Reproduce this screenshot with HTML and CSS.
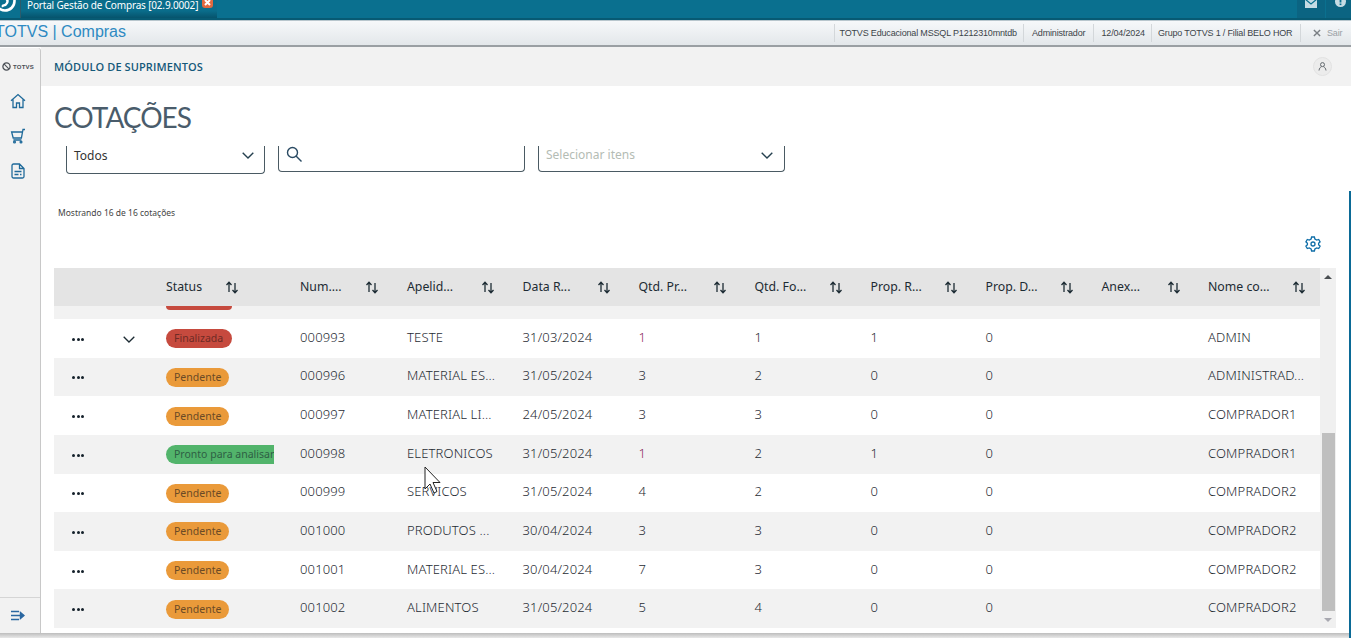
FILE: index.html
```html
<!DOCTYPE html>
<html lang="pt-BR">
<head>
<meta charset="utf-8">
<title>Portal Gestão de Compras</title>
<link rel="stylesheet" href="styles.css">
</head>
<body>
<div class="app">
  <header class="topbar">
    <svg class="applogo" width="20" height="18" viewBox="0 0 20 18"><circle cx="5" cy="1" r="9.500" fill="none" stroke="#fff" stroke-width="2.600"/><path d="M1 -1c3-2 8 0 6 4S2 4 3 7" fill="none" stroke="#fff" stroke-width="2.400"/></svg>
    <div class="tab">
      <span class="tabtext">Portal Gestão de Compras [02.9.0002]</span>
      <svg class="tabclose" width="11" height="11" viewBox="0 0 11 11"><rect width="11" height="11" rx="3" fill="#e0683f"/><path d="M3 3l5 5M8 3l-5 5" stroke="#fff" stroke-width="2"/></svg>
    </div>
    <div class="topactions">
      <div class="topbtn"><svg width="12" height="9" viewBox="0 0 12 9"><rect width="12" height="9" fill="#c5dbe4"/><path d="M0 0l6 5 6-5" fill="none" stroke="#0a7190" stroke-width="1.200"/></svg></div>
      <div class="topbtn"><svg width="11" height="11" viewBox="0 0 11 11"><circle cx="5.500" cy="4.500" r="5.500" fill="#c5dbe4"/><rect x="4.600" y="1.500" width="1.800" height="4" fill="#0a7190"/><rect x="4.600" y="6.500" width="1.800" height="1.600" fill="#0a7190"/></svg></div>
    </div>
  </header>

  <div class="appbar">
    <div class="apptitle">TOTVS | Compras</div>
    <div class="appinfo">
      <span class="info info-db">TOTVS Educacional MSSQL P1212310mntdb</span>
      <span class="info info-user">Administrador</span>
      <span class="info info-date">12/04/2024</span>
      <span class="info info-branch">Grupo TOTVS 1 / Filial BELO HOR</span>
      <span class="logout"><svg width="8" height="8" viewBox="0 0 9 9"><path d="M1 1l7 7M8 1l-7 7" stroke="#7a7f84" stroke-width="1.600"/></svg>Sair</span>
    </div>
  </div>

  <div class="workspace">
    <aside class="sidebar">
      <div class="brand">
        <svg width="9" height="9" viewBox="0 0 9 9"><circle cx="4.500" cy="4.500" r="3.600" fill="none" stroke="#4a4f55" stroke-width="1.300"/><path d="M2.200 2.200l4.600 4.600" stroke="#4a4f55" stroke-width="1.100"/></svg>
        <span>TOTVS</span>
      </div>
      <nav class="sidenav">
        <svg width="16" height="16" viewBox="0 0 16 16" fill="none" stroke="#1f6a9a" stroke-width="1.300"><path d="M1 7.800L8 1.500l7 6.300M3 6.500V14.500h3.500V10h3v4.500H13V6.500"/></svg>
        <svg width="16" height="16" viewBox="0 0 16 16" fill="none" stroke="#1f6a9a" stroke-width="1.300"><path d="M15 1.500h-2L11.400 10H3.200L1.600 4H12.600M3.400 12h8"/><circle cx="4.500" cy="14" r=".9"/><circle cx="11" cy="14" r=".9"/></svg>
        <svg width="14" height="16" viewBox="0 0 14 16" fill="none" stroke="#1f6a9a" stroke-width="1.300"><path d="M2.500 1h6L13 5.500V13.500a1.500 1.500 0 0 1-1.500 1.500h-9A1.500 1.500 0 0 1 1 13.500V2.500A1.500 1.500 0 0 1 2.500 1zM8.500 1v4.500H13M3.500 8.500h7M3.500 11.500h4M9 11.500h1.500"/></svg>
      </nav>
      <div class="sidefoot">
        <svg width="14" height="11" viewBox="0 0 14 11" fill="none" stroke="#2a67a0" stroke-width="1.400"><path d="M0 1.500h8M0 5.500h11M0 9.500h8"/><path d="M9.500 2.500l3.500 3-3.500 3z" fill="#2a67a0"/></svg>
      </div>
    </aside>

    <main class="content">
      <div class="modulebar">
        <span class="modulename">MÓDULO DE SUPRIMENTOS</span>
        <span class="avatar"><svg width="9" height="9" viewBox="0 0 9 9" fill="none" stroke="#555b61" stroke-width=".9"><circle cx="4.500" cy="2.600" r="2"/><path d="M1 8.500c.3-2.400 1.500-3.500 2.400-3.700M8 8.500c-.3-2.400-1.500-3.500-2.400-3.700"/></svg></span>
      </div>
      <div class="page">
        <h1 class="pagetitle">COTAÇÕES</h1>
        <div class="filters">
          <div class="field field-status"><span>Todos</span><svg class="chev" width="12" height="7" viewBox="0 0 12 7" fill="none" stroke="#25404f" stroke-width="1.400"><path d="M.7.7L6 6l5.300-5.300"/></svg></div>
          <div class="field field-search"><svg width="17" height="17" viewBox="0 0 17 17" fill="none" stroke="#2a4a63" stroke-width="1.400"><circle cx="6.500" cy="6.500" r="5"/><path d="M10 10l5.500 5.500"/></svg></div>
          <div class="field field-items"><span class="placeholder">Selecionar itens</span><svg class="chev" width="12" height="7" viewBox="0 0 12 7" fill="none" stroke="#25404f" stroke-width="1.400"><path d="M.7.7L6 6l5.300-5.300"/></svg></div>
        </div>
        <div class="count">Mostrando 16 de 16 cotações</div>
        <div class="tools">
          <svg width="16" height="16" viewBox="0 0 16 16" fill="none" stroke="#0f6ea8" stroke-width="1.300"><path d="M6.600 1h2.800l.5 2 1.800 1 2-.6 1.400 2.400-1.500 1.400v1.600l1.500 1.400-1.400 2.400-2-.6-1.800 1-.5 2H6.600l-.5-2-1.800-1-2 .6L.9 10.200l1.500-1.400V7.200L.9 5.800l1.400-2.400 2 .6 1.800-1z"/><circle cx="8" cy="8" r="2"/></svg>
        </div>
        <div class="tablewrap">
          <div class="table">
            <div class="row head">
              <div class="cell"></div>
              <div class="cell hcell"><span>Status</span><svg class="sort" width="14" height="13" viewBox="0 0 14 13" fill="none" stroke="#1c2b33" stroke-width="1.300"><path d="M4 11V2M1.500 4L4 1.300 6.500 4M10 2v9.500M7.500 9l2.500 2.700L12.500 9"/></svg></div>
              <div class="cell hcell"><span>Num....</span><svg class="sort" width="14" height="13" viewBox="0 0 14 13" fill="none" stroke="#1c2b33" stroke-width="1.300"><path d="M4 11V2M1.500 4L4 1.300 6.500 4M10 2v9.500M7.500 9l2.500 2.700L12.500 9"/></svg></div>
              <div class="cell hcell"><span>Apelid...</span><svg class="sort" width="14" height="13" viewBox="0 0 14 13" fill="none" stroke="#1c2b33" stroke-width="1.300"><path d="M4 11V2M1.500 4L4 1.300 6.500 4M10 2v9.500M7.500 9l2.500 2.700L12.500 9"/></svg></div>
              <div class="cell hcell"><span>Data R...</span><svg class="sort" width="14" height="13" viewBox="0 0 14 13" fill="none" stroke="#1c2b33" stroke-width="1.300"><path d="M4 11V2M1.500 4L4 1.300 6.500 4M10 2v9.500M7.500 9l2.500 2.700L12.500 9"/></svg></div>
              <div class="cell hcell"><span>Qtd. Pr...</span><svg class="sort" width="14" height="13" viewBox="0 0 14 13" fill="none" stroke="#1c2b33" stroke-width="1.300"><path d="M4 11V2M1.500 4L4 1.300 6.500 4M10 2v9.500M7.500 9l2.500 2.700L12.500 9"/></svg></div>
              <div class="cell hcell"><span>Qtd. Fo...</span><svg class="sort" width="14" height="13" viewBox="0 0 14 13" fill="none" stroke="#1c2b33" stroke-width="1.300"><path d="M4 11V2M1.500 4L4 1.300 6.500 4M10 2v9.500M7.500 9l2.500 2.700L12.500 9"/></svg></div>
              <div class="cell hcell"><span>Prop. R...</span><svg class="sort" width="14" height="13" viewBox="0 0 14 13" fill="none" stroke="#1c2b33" stroke-width="1.300"><path d="M4 11V2M1.500 4L4 1.300 6.500 4M10 2v9.500M7.500 9l2.500 2.700L12.500 9"/></svg></div>
              <div class="cell hcell"><span>Prop. D...</span><svg class="sort" width="14" height="13" viewBox="0 0 14 13" fill="none" stroke="#1c2b33" stroke-width="1.300"><path d="M4 11V2M1.500 4L4 1.300 6.500 4M10 2v9.500M7.500 9l2.500 2.700L12.500 9"/></svg></div>
              <div class="cell hcell"><span>Anex...</span><svg class="sort" width="14" height="13" viewBox="0 0 14 13" fill="none" stroke="#1c2b33" stroke-width="1.300"><path d="M4 11V2M1.500 4L4 1.300 6.500 4M10 2v9.500M7.500 9l2.500 2.700L12.500 9"/></svg></div>
              <div class="cell hcell"><span>Nome co...</span><svg class="sort" width="14" height="13" viewBox="0 0 14 13" fill="none" stroke="#1c2b33" stroke-width="1.300"><path d="M4 11V2M1.500 4L4 1.300 6.500 4M10 2v9.500M7.500 9l2.500 2.700L12.500 9"/></svg></div>
            </div>
            <div class="rows">
              <div class="row partial">
                <div class="cell"></div>
                <div class="cell"><span class="badge red badge-cut"></span></div>
              </div>
              <div class="row">
                <div class="cell acts"><span class="dots"><i></i><i></i><i></i></span><svg width="12" height="7" viewBox="0 0 12 7" fill="none" stroke="#1c2b33" stroke-width="1.300"><path d="M.7.7L6 6l5.300-5.300"/></svg></div>
                <div class="cell"><span class="badge red">Finalizada</span></div>
                <div class="cell">000993</div><div class="cell">TESTE</div><div class="cell">31/03/2024</div><div class="cell purple">1</div><div class="cell">1</div><div class="cell">1</div><div class="cell">0</div><div class="cell"></div><div class="cell">ADMIN</div>
              </div>
              <div class="row">
                <div class="cell acts"><span class="dots"><i></i><i></i><i></i></span></div>
                <div class="cell"><span class="badge orange">Pendente</span></div>
                <div class="cell">000996</div><div class="cell">MATERIAL ES...</div><div class="cell">31/05/2024</div><div class="cell">3</div><div class="cell">2</div><div class="cell">0</div><div class="cell">0</div><div class="cell"></div><div class="cell">ADMINISTRAD...</div>
              </div>
              <div class="row">
                <div class="cell acts"><span class="dots"><i></i><i></i><i></i></span></div>
                <div class="cell"><span class="badge orange">Pendente</span></div>
                <div class="cell">000997</div><div class="cell">MATERIAL LI...</div><div class="cell">24/05/2024</div><div class="cell">3</div><div class="cell">3</div><div class="cell">0</div><div class="cell">0</div><div class="cell"></div><div class="cell">COMPRADOR1</div>
              </div>
              <div class="row">
                <div class="cell acts"><span class="dots"><i></i><i></i><i></i></span></div>
                <div class="cell"><span class="badge green">Pronto para analisar</span></div>
                <div class="cell">000998</div><div class="cell">ELETRONICOS</div><div class="cell">31/05/2024</div><div class="cell purple">1</div><div class="cell">2</div><div class="cell">1</div><div class="cell">0</div><div class="cell"></div><div class="cell">COMPRADOR1</div>
              </div>
              <div class="row">
                <div class="cell acts"><span class="dots"><i></i><i></i><i></i></span></div>
                <div class="cell"><span class="badge orange">Pendente</span></div>
                <div class="cell">000999</div><div class="cell">SERVICOS</div><div class="cell">31/05/2024</div><div class="cell">4</div><div class="cell">2</div><div class="cell">0</div><div class="cell">0</div><div class="cell"></div><div class="cell">COMPRADOR2</div>
              </div>
              <div class="row">
                <div class="cell acts"><span class="dots"><i></i><i></i><i></i></span></div>
                <div class="cell"><span class="badge orange">Pendente</span></div>
                <div class="cell">001000</div><div class="cell">PRODUTOS ...</div><div class="cell">30/04/2024</div><div class="cell">3</div><div class="cell">3</div><div class="cell">0</div><div class="cell">0</div><div class="cell"></div><div class="cell">COMPRADOR2</div>
              </div>
              <div class="row">
                <div class="cell acts"><span class="dots"><i></i><i></i><i></i></span></div>
                <div class="cell"><span class="badge orange">Pendente</span></div>
                <div class="cell">001001</div><div class="cell">MATERIAL ES...</div><div class="cell">30/04/2024</div><div class="cell">7</div><div class="cell">3</div><div class="cell">0</div><div class="cell">0</div><div class="cell"></div><div class="cell">COMPRADOR2</div>
              </div>
              <div class="row">
                <div class="cell acts"><span class="dots"><i></i><i></i><i></i></span></div>
                <div class="cell"><span class="badge orange">Pendente</span></div>
                <div class="cell">001002</div><div class="cell">ALIMENTOS</div><div class="cell">31/05/2024</div><div class="cell">5</div><div class="cell">4</div><div class="cell">0</div><div class="cell">0</div><div class="cell"></div><div class="cell">COMPRADOR2</div>
              </div>
            </div>
          </div>
          <div class="scrollbar">
            <span class="arrow-up"></span>
            <span class="thumb"></span>
            <span class="arrow-down"></span>
          </div>
        </div>
      </div>
    </main>
  </div>
  <div class="edge"></div>
  <div class="bottomshadow"></div>
  <svg class="cursor" width="19" height="30" viewBox="0 0 19 30"><path d="M1 1v22l5-5 4 9 3-1.500-4-9h7z" fill="#fff" stroke="#222" stroke-width="1"/></svg>
</div>
</body>
</html>
```
FILE: styles.css
```css
* { box-sizing: border-box; }
html, body { margin: 0; padding: 0; height: 100%; overflow: hidden; background: #fff; }
body { font-family: "Open Sans", "Liberation Sans", sans-serif; color: #333; }
.app { position: relative; width: 1351px; height: 638px; display: flex; flex-direction: column; overflow: hidden; }

.topbar { height: 20px; flex: none; background: #0a708f; border-bottom: 2px solid #075a73; display: flex; align-items: stretch; }
.applogo { flex: none; }
.tab { width: 197px; height: 18px; flex: none; padding-left: 6px; background: linear-gradient(#0a6d8b, #0a6d8b 60%, #06536c); display: flex; align-items: flex-start; gap: 4px; border-left: 1px solid #2c5b6b; overflow: hidden; }
.tabtext { font-family: "Noto Sans", sans-serif; font-size: 10px; letter-spacing: -.17px; line-height: 11px; color: #fff; white-space: nowrap; }
.tabclose { margin-top: -3px; flex: none; }
.topactions { margin-left: auto; display: flex; gap: 1px; height: 18px; }
.topbtn { width: 28px; height: 18px; background: #0b6482; display: flex; justify-content: flex-end; padding-right: 8px; align-items: flex-start; overflow: hidden; }
.topbtn svg { margin-top: -1px; }
.topbtn:last-child { width: 25px; padding-right: 5px; }
.topbtn:last-child svg { margin-top: -3px; }

.appbar { height: 27px; flex: none; border-top: 1px solid #b8c6cd; border-bottom: 2px solid #9a9fa3; background: linear-gradient(#f6f8fa, #e3e7ea); display: flex; align-items: center; justify-content: space-between; overflow: hidden; }
.apptitle { font-family: "Liberation Sans", sans-serif; font-size: 16px; line-height: 20px; color: #2e8ac2; margin: -2px 0 0 -5px; white-space: nowrap; }
.appinfo { display: flex; align-items: center; height: 18px; font-family: "Liberation Sans", sans-serif; font-size: 9px; letter-spacing: -.17px; color: #3c4449; }
.info { height: 100%; display: flex; align-items: center; border-left: 1px solid #d3d7da; white-space: nowrap; overflow: hidden; }
.info-db { width: 189.500px; padding-left: 5px; }
.info-user { width: 69.500px; padding-left: 8px; }
.info-date { width: 58.500px; padding-left: 8px; }
.info-branch { width: 149px; padding-left: 6px; }
.logout { width: 51px; height: 100%; display: flex; align-items: center; gap: 6px; padding-left: 12px; color: #9aa0a5; border-left: 1px solid #d3d7da; }

.workspace { flex: 1; display: flex; min-height: 0; height: 586px; margin-bottom: 5px; }
.sidebar { width: 41px; flex: none; margin-top: 1px; background: #f2f2f2; border-right: 1px solid #c8c8c8; border-top-right-radius: 3px; display: flex; flex-direction: column; }
.brand { height: 36px; display: flex; align-items: center; justify-content: center; gap: 2px; padding: 1px 4px 0 0; }
.brand span { font-family: "Liberation Sans", sans-serif; font-size: 6px; font-weight: 700; letter-spacing: .2px; color: #4a4f55; }
.sidenav { display: flex; flex-direction: column; align-items: center; gap: 19px; padding: 9px 4px 0 0; }
.sidefoot { margin-top: auto; height: 36px; border-top: 1px solid #d5d5d5; display: flex; align-items: center; justify-content: center; padding-right: 4px; }

.content { flex: 1; min-width: 0; display: flex; flex-direction: column; background: #fff; }
.modulebar { height: 39px; flex: none; background: #f2f2f2; display: flex; align-items: center; justify-content: space-between; padding: 0 19px 0 13px; }
.modulename { font-family: "Open Sans", sans-serif; font-size: 11px; font-weight: 600; color: #15597a; letter-spacing: .1px; }
.avatar { width: 19px; height: 19px; border-radius: 50%; background: #ececec; border: 1px solid #e2e2e2; display: flex; align-items: center; justify-content: center; }

.page { flex: 1; padding-left: 13px; display: flex; flex-direction: column; min-height: 0; }
.pagetitle { margin: 0; height: 60px; padding-top: 12px; font-family: "Lato", sans-serif; font-weight: 400; font-size: 28px; letter-spacing: -1px; line-height: 38px; color: #4a5c6b; flex: none; }
.filters { height: 28px; display: flex; align-items: flex-start; flex: none; padding-left: 12px; gap: 13px; }
.field { height: 26px; display: flex; align-items: flex-start; justify-content: space-between; border: 1px solid #4a5a63; border-top: 0; border-radius: 0 0 4px 4px; padding: 0 9px 0 7px; font-family: "Noto Sans", sans-serif; font-size: 12px; line-height: 16px; color: #333; }
.field-status { width: 199px; height: 28px; }
.field-status span { padding-top: 2px; }
.field-status .chev { margin-top: 6px; margin-right: 1px; }
.field-search { width: 247px; justify-content: flex-start; }
.field-items { width: 247px; }
.field-items .chev { margin-top: 6px; margin-right: 2px; }
.placeholder { color: #b4bcb4; padding-top: 1px; }
.count { flex: none; height: 22px; margin-top: 29px; padding-left: 4px; font-family: "Noto Sans", sans-serif; font-size: 8.500px; line-height: 20px; color: #444; }
.tools { flex: none; height: 43px; display: flex; justify-content: flex-end; padding: 11px 30px 0 0; }

.tablewrap { display: flex; width: 1282px; flex: none; height: 360px; }
.table { width: 1266px; font-family: "Noto Sans", "Open Sans", sans-serif; font-size: 13px; font-weight: 300; letter-spacing: .15px; color: #1f2b33; }
.row { display: grid; grid-template-columns: 112px 134px 107px 115.500px 116px 116px 116px 115px 116px 106.500px 112px; height: 38.625px; align-items: center; background: #fff; }
.rows .row:nth-child(even) { background: #fff; }
.rows .row:nth-child(odd) { background: #f2f2f2; }
.head { height: 38px; background: #e4e4e4; color: #1c2b33; font-size: 12.300px; font-weight: 400; letter-spacing: 0; }
.partial { height: 13px; overflow: hidden; align-items: start; }
.cell { white-space: nowrap; min-width: 0; }
.rows .cell { padding-bottom: 3px; }
.hcell { display: grid; grid-template-columns: 59px 14px; align-items: center; }
.head .hcell span { margin-top: -1px; }
.head .hcell:nth-child(3), .head .hcell:nth-child(10) { grid-template-columns: 65px 14px; }
.head .hcell:nth-child(4), .head .hcell:nth-child(5), .head .hcell:nth-child(6), .head .hcell:nth-child(7), .head .hcell:nth-child(9) { grid-template-columns: 74px 14px; }
.head .hcell:nth-child(8) { grid-template-columns: 73px 14px; }
.head .hcell:nth-child(11) { grid-template-columns: 84px 14px; }
.sort { margin-top: 1px; }
.rows .acts { display: flex; align-items: center; padding: 2px 0 0 18px; gap: 38px; }
.rows .cell:nth-child(2) { padding: 0; }
.rows .partial .cell { padding: 0; }
.dots { display: inline-flex; gap: 1.500px; width: 13px; }
.dots i { width: 3px; height: 3px; border-radius: 50%; background: #14202a; }
.purple { color: #8a2a60; }
.badge { display: inline-block; height: 19px; line-height: 18px; padding: 0 8px; border-radius: 10px; font-size: 10.500px; font-weight: 400; letter-spacing: 0; white-space: nowrap; color: #5a4a3a; }
.red { background: #c64a3e; color: #6e2b25; width: 66px; }
.orange { background: #ea9a3a; color: #6a4a26; width: 63px; }
.green { background: #52b46b; color: #2e5f44; width: 108px; border-radius: 10px 0 0 10px; overflow: hidden; padding-right: 0; display: block; }
.badge-cut { display: block; height: 4px; border-radius: 0 0 10px 10px; }

.scrollbar { width: 16px; background: #f0f0f0; display: flex; flex-direction: column; align-items: center; height: 360px; }
.arrow-up { margin-top: 7px; flex: none; width: 0; height: 0; border: 4px solid transparent; border-top: 0; border-bottom: 4px solid #4a4f52; }
.thumb { flex: none; width: 13px; height: 178px; margin: 154px 0 0 1px; background: #bfbfbf; }
.arrow-down { flex: none; margin-top: 7px; width: 0; height: 0; border: 4px solid transparent; border-bottom: 0; border-top: 4px solid #a8a8b0; }

.edge { position: absolute; right: 0; top: 191px; bottom: 0; width: 2px; background: #0b6a96; }
.bottomshadow { position: absolute; left: 0; right: 2px; bottom: 0; height: 5px; background: linear-gradient(#bdbdbd, #e8e8e8); }
.cursor { position: absolute; left: 424px; top: 466px; }
```
